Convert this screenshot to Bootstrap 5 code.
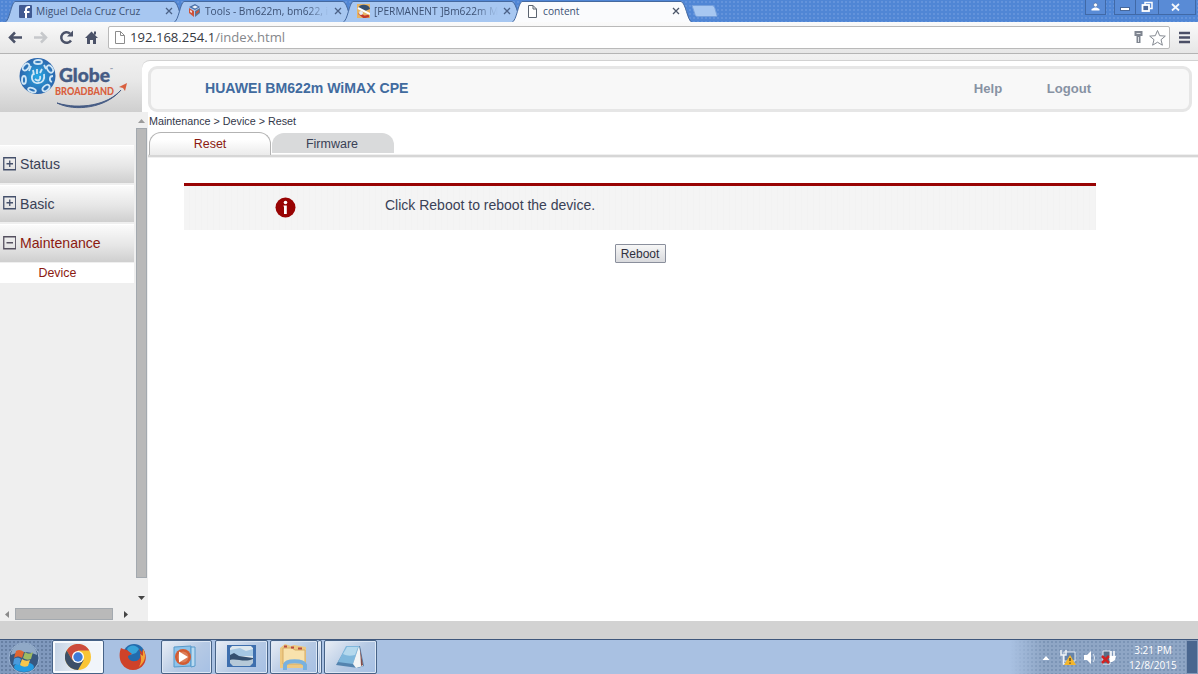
<!DOCTYPE html>
<html lang="en">
<head>
  <meta charset="UTF-8">
  <title>content</title>
  <meta name="viewport" content="width=device-width, initial-scale=1.0">
  <link href="https://cdn.jsdelivr.net/npm/bootstrap@5.3.3/dist/css/bootstrap.min.css" rel="stylesheet">
  <style>
    body {
      font-family: "Liberation Sans", Arial, sans-serif;
      font-size: 12px;
      line-height: 1.2;
      color: #3a4156;
      background: #fff;
    }
    svg { display: block; flex-shrink: 0; }
    .ui-font { font-family: "Open Sans", "Noto Sans", sans-serif; }

    /* browser window */
    .tab-strip {
      height: 22px;
      padding-left: 5px;
      background: radial-gradient(#6393db 35%, transparent 45%) 0 0 / 4px 4px, #5086d5;
    }
    .win-tab {
      width: 180px;
      height: 22px;
      margin-right: -11px;
      padding: 0 12px 0 14px;
      font-size: 10.2px;
      color: #3d5275;
    }
    .win-tab .tab-shape { position: absolute; left: 0; top: 0; }
    .win-tab > .tab-body { position: relative; height: 22px; }
    .tab-title { width: 124px; margin-left: 4px; white-space: nowrap; }
    .tab-fade {
      -webkit-mask-image: linear-gradient(90deg, #000 82%, transparent 100%);
      mask-image: linear-gradient(90deg, #000 82%, transparent 100%);
    }
    .win-buttons { margin-right: 2px; }
    .win-buttons > div { height: 15px; border: 1px solid #4169a6; border-top: 0; background: #598bd6; }
    .win-buttons > div + div { border-left: 0; }
    .toolbar {
      height: 32px;
      padding: 4px 7px 4px 7px;
      background: linear-gradient(#fafafa, #e6e6e6);
      border-bottom: 1px solid #b4b4b4;
    }
    .address {
      height: 23px;
      margin-left: 9px;
      border: 1px solid #b9b9b9;
      border-radius: 2px;
      background: #fff;
      font-size: 13.1px;
      color: #35383f;
    }
    .address span { color: #85878b; }

    /* router page */
    .router { height: 567px; }
    .brand-row { height: 58px; background: linear-gradient(#f1f1f1, #e8e8e8 45%, #cfcfcf); }
    .brand-logo { width: 142px; }
    .brand-panel { margin-top: 6px; padding: 5px 6px 0 6px; background: #fff; border-top: 1px solid #d2d2d2; border-radius: 8px 0 0 0; }
    .brand-box {
      height: 46px;
      border: 3px solid #e6e6e6;
      border-radius: 9px;
      background: #f8f8f8;
      padding-left: 54px;
      padding-bottom: 1px;
      font-weight: bold;
      color: #416b9f;
      font-size: 14.1px;
    }
    .brand-box .top-link { color: #8792a3; font-size: 13.1px; }

    .side-menu { width: 148px; background: #efefef; }
    .menu-col { width: 134px; padding-top: 33px; }
    .menu-item {
      height: 37.5px;
      margin-bottom: 2px;
      padding-left: 3px;
      padding-top: 1px;
      border-top: 1px solid #fff;
      background: linear-gradient(#fbfbfb, #e6e6e6 55%, #cfcfcf);
      font-size: 14.1px;
    }
    .menu-item svg { margin-top: -2px; }
    .menu-sub { height: 20px; margin-top: -1px; padding: 1px 0 0 38.5px; background: #fff; font-size: 12.4px; }
    .red-text { color: #8b1a10; }
    .v-scroll { width: 14px; padding: 7px 1px 7px 2px; }
    .v-thumb { width: 11px; height: 450px; margin-top: 5px; background: #b9b9b9; border: 1px solid #a3a9af; }
    .h-scroll { height: 14px; padding-left: 5px; }
    .h-thumb { width: 98px; height: 12px; margin: 0 11px 0 6px; background: #b9b9b9; border: 1px solid #a3a9af; }

    .crumbs { height: 20px; padding: 3px 0 0 1px; font-size: 10.75px; color: #33384a; }
    .page-tabs { height: 26px; padding-left: 1px; font-size: 12.5px; background: linear-gradient(#fff 22px, #f0f0f0 22px, #f0f0f0 23px, #d6d6d6 23px, #d6d6d6 25px, #f0f0f0 25px); }
    .page-tab { width: 122px; height: 22px; margin-right: 1px; padding-top: 1px; border-radius: 12px 12px 0 0; }
    .page-tab-on { height: 23px; border: 1px solid #b3b3b3; border-bottom: 0; background: linear-gradient(#fff 30%, #ebebeb); }
    .page-tab-off { margin-top: 1px; height: 20px; padding: 3px 2px 0 0; background: #d9dadb; }
    .notice {
      width: 912px;
      height: 47px;
      margin: 25px 0 14px 36px;
      padding-bottom: 1px;
      border-top: 3px solid #980303;
      background: repeating-linear-gradient(90deg, #f4f4f4 0 5px, #f2f2f2 5px 6px);
      font-size: 14px;
    }
    .notice-icon { width: 201px; padding-left: 91px; }
    .reboot-btn {
      width: 51px;
      height: 19px;
      margin-left: 466.5px;
      padding: 0;
      border: 1px solid #8a8f9c;
      border-radius: 1px;
      background: linear-gradient(#f7f7f7, #d9dadd);
      color: #30303e;
      font-size: 12px;
      line-height: 16px;
    }

    /* desktop taskbar */
    .status-band { height: 18px; background: #d2d2d2; }
    .taskbar { height: 35px; border-top: 1px solid #3f577c; background: #a9c1e2; }
    .start-zone {
      width: 52px;
      background: radial-gradient(#6780a3 35%, transparent 45%) 0 0 / 4px 4px, #8099bd;
    }
    .task-btn {
      height: 34px;
      border: 1px solid #476387;
      border-radius: 2px;
      background: linear-gradient(135deg, #e9eef5, #b5c9e4 55%, #a6c0e4);
      box-shadow: inset 0 0 0 1px #dce7f5;
    }
    .task-btn-active { background: linear-gradient(100deg, #c3d2e4, #f1f5fa 70%); box-shadow: inset 0 0 0 2px #f7fafd; }
    .tray {
      width: 188px;
      background: linear-gradient(90deg, #a9c1e2, transparent 18%), radial-gradient(#7c95b6 35%, transparent 45%) 0 0 / 4px 4px, #8fa6c5;
      color: #fff;
      font-size: 10.1px;
    }
    .clock { width: 66px; line-height: 15px; padding-top: 3px; }
    .peek { width: 12px; background: #49668f; border: 1px solid #8299b9; }
  </style>
</head>
<body class="overflow-hidden">

  <!-- tab strip -->
  <div class="tab-strip ui-font d-flex">
    <div class="win-tab position-relative flex-shrink-0">
      <svg class="tab-shape" width="180" height="22"><path d="M0 22.5C5 20 6 3 10 1.500H169C174 3 175 20 180 22.500" fill="#a7c7f1" stroke="#45699f"/></svg>
      <div class="tab-body d-flex align-items-center">
        <svg width="13" height="13"><rect width="13" height="13" rx="1" fill="#405a92"/><path d="M11 2H9.500C7.500 2 7 3 7 4.500V13M5 7h5.500" fill="none" stroke="#fff" stroke-width="2"/></svg>
        <div class="tab-title">Miguel Dela Cruz Cruz</div>
        <svg class="ms-auto" width="8" height="8"><path d="M1 1l6 6M7 1L1 7" stroke="#4b6186" stroke-width="1.300"/></svg>
      </div>
    </div>
    <div class="win-tab position-relative flex-shrink-0">
      <svg class="tab-shape" width="180" height="22"><path d="M0 22.500C5 20 6 3 10 1.500H169C174 3 175 20 180 22.500" fill="#a7c7f1" stroke="#45699f"/></svg>
      <div class="tab-body d-flex align-items-center">
        <svg width="13" height="14"><path d="M1 3l6-3 5 3-5 3z" fill="#4a70a8"/><path d="M1 4l5 3v6l-5-4z" fill="#cf5238"/><path d="M12 4L7 7v6l5-4z" fill="#60748f"/><path d="M4 3l3-1.500L10 3 7 4.500z" fill="#eef3fa"/><path d="M2 6l2 1v2L2 8z" fill="#f3d5cf"/><path d="M8 8l3-2v2l-3 2z" fill="#cf5238"/></svg>
        <div class="tab-title tab-fade">Tools - Bm622m, bm622, i</div>
        <svg class="ms-auto" width="8" height="8"><path d="M1 1l6 6M7 1L1 7" stroke="#4b6186" stroke-width="1.300"/></svg>
      </div>
    </div>
    <div class="win-tab position-relative flex-shrink-0">
      <svg class="tab-shape" width="180" height="22"><path d="M0 22.500C5 20 6 3 10 1.500H169C174 3 175 20 180 22.500" fill="#a7c7f1" stroke="#45699f"/></svg>
      <div class="tab-body d-flex align-items-center">
        <svg width="13" height="14"><rect width="14" height="14" fill="#e7b465"/><path d="M1 5C1 0 12-1 13 5L8 7z" fill="#37506f"/><path d="M1 4l12 6" stroke="#fff" stroke-width="2"/><path d="M2 9l5 4 5-1" fill="none" stroke="#c33a2b" stroke-width="2.500"/><circle cx="4" cy="9" r="2" fill="#e7eef5"/></svg>
        <div class="tab-title tab-fade">[PERMANENT ]Bm622m M</div>
        <svg class="ms-auto" width="8" height="8"><path d="M1 1l6 6M7 1L1 7" stroke="#4b6186" stroke-width="1.300"/></svg>
      </div>
    </div>
    <div class="win-tab position-relative flex-shrink-0">
      <svg class="tab-shape" width="180" height="22"><path d="M0 22.500C5 20 6 3 10 1.500H169C174 3 175 20 180 22.500" fill="#fafbfd" stroke="#45699f"/></svg>
      <div class="tab-body d-flex align-items-center">
        <svg width="13" height="13"><path d="M2.500.5H7L10.500 4v8.500h-8zM7 .5V4h3.500" fill="#fff" stroke="#5b6470"/></svg>
        <div class="tab-title">content</div>
        <svg class="ms-auto" width="8" height="8"><path d="M1 1l6 6M7 1L1 7" stroke="#4b5569" stroke-width="1.300"/></svg>
      </div>
    </div>
    <svg class="ms-2 mt-1" width="30" height="14"><path d="M3 1.500h20c2 0 2 1 3 3l2 7c0 1 0 1-1 1H9c-2 0-3-1-3-2z" fill="#a7c7f1" stroke="#76a0dc"/></svg>
    <div class="win-buttons d-flex ms-auto">
      <div class="d-flex justify-content-center me-1" style="width: 21px"><svg width="9" height="13"><circle cx="4.500" cy="5" r="2" fill="#fff" stroke="#47679a" stroke-width=".6"/><path d="M.5 10.500V9l3-1.500h2L8.500 9v1.500z" fill="#fff"/></svg></div>
      <div class="d-flex justify-content-center ms-1" style="width: 22px; border-left: 1px solid #4169a6"><svg width="10" height="13"><rect x=".5" y="7.500" width="9" height="3" fill="#fff" stroke="#47679a"/></svg></div>
      <div class="d-flex justify-content-center" style="width: 23px"><svg width="12" height="13"><path d="M4 5V2.500h7v6H9" fill="none" stroke="#fff" stroke-width="1.500"/><rect x="1.500" y="5" width="6.500" height="6" fill="#49679a" stroke="#fff" stroke-width="1.800"/></svg></div>
      <div class="d-flex justify-content-center" style="width: 37px"><svg class="me-1" width="9" height="13"><path d="M1 4l7 6.500M8 4l-7 6.500" stroke="#f4f7fb" stroke-width="1.800"/></svg></div>
    </div>
  </div>

  <!-- address bar -->
  <div class="toolbar d-flex align-items-center">
    <svg width="92" height="18" fill="none">
      <path d="M15 8.500H3M8 3.500l-5 5 5 5" stroke="#4b5268" stroke-width="2.500"/>
      <path d="M27 8.500h12M34 3.500l5 5-5 5" stroke="#c6c8cb" stroke-width="2.500"/>
      <path d="M64 11.500A5.300 5.300 0 1 1 63 4.500" stroke="#4b5268" stroke-width="2.500"/><path d="M66 1.500v6h-6z" fill="#4b5268"/>
      <path d="M78 9L84.500 2.500 91 9h-2v6h-3v-4h-3v4h-3V9zM87 2.500h2v3h-2z" fill="#4b5268"/>
    </svg>
    <div class="address flex-grow-1 d-flex align-items-center ui-font">
      <svg class="ms-1" width="17" height="15"><path d="M2.500 1.500h5l4 4v8h-9zM7.500 1.500v4h4" fill="#fff" stroke="#8c8c8c"/></svg>
      <div>192.168.254.1<span>/index.html</span></div>
      <svg class="ms-auto" width="36" height="18"><path d="M1.500 2h8v5H7.500v7h-4V7h-2z" fill="#7f8590"/><path d="M3.500 4.500h4M5.500 8v5" stroke="#dfe2e6"/><path d="M24.500 1.500l2.200 5.200 5.600.4-4.300 3.600 1.400 5.500-4.900-3-4.900 3 1.400-5.500-4.300-3.600 5.600-.4z" fill="#fff" stroke="#858a92"/></svg>
    </div>
    <svg class="ms-2" width="13" height="13"><path d="M1 2h11M1 6.500h11M1 11h11" stroke="#4b4f66" stroke-width="2.600"/></svg>
  </div>

  <div class="router d-flex flex-column">
    <div class="brand-row d-flex">
      <div class="brand-logo">
        <svg width="142" height="58">
          <defs><radialGradient id="globe"><stop offset="0" stop-color="#27a8e4"/><stop offset="1" stop-color="#2d67ad"/></radialGradient></defs>
          <circle cx="37.500" cy="22" r="18" fill="url(#globe)"/>
          <g fill="none" stroke="#cfe6f6" stroke-width="1.800">
            <path d="M33 20c-3 5 1 10 5 9 5 0 7-4 6-9M34 21l-1-5M37 20v-5M40 19l2-4M35 25c3 3 6 1 5-3"/>
            <ellipse cx="38" cy="8" rx="4" ry="2"/><ellipse cx="50" cy="15" rx="2.500" ry="4" transform="rotate(-35 50 15)"/>
            <ellipse cx="26" cy="13" rx="2.500" ry="4" transform="rotate(40 26 13)"/><ellipse cx="24" cy="26" rx="2" ry="4"/>
            <ellipse cx="32" cy="36" rx="4" ry="2" transform="rotate(20 32 36)"/><ellipse cx="46" cy="34" rx="4" ry="2.500" transform="rotate(-40 46 34)"/>
            <path d="M53 22c-4 0-4 5-1 6M31 12l-2 5M44 11l2 4"/>
          </g>
          <text x="59" y="28" font-family="Lato, sans-serif" font-size="19.500" font-weight="900" fill="#455b84" stroke="#455b84" stroke-width=".4" textLength="51" lengthAdjust="spacingAndGlyphs">Globe</text>
          <text x="110" y="17" font-family="Lato, sans-serif" font-size="4" fill="#455b84">™</text>
          <text x="55" y="41" font-family="Lato, sans-serif" font-size="10.500" font-weight="900" fill="#d95f3e" textLength="59" lengthAdjust="spacingAndGlyphs">BROADBAND</text>
          <path d="M57 49C75 58 106 54 121 36 108 51 80 56 57 49z" fill="#455b84" stroke="#455b84"/>
          <path d="M119 33l8-4-2 8-2-3z" fill="#d95f3e"/>
        </svg>
      </div>
      <div class="brand-panel flex-grow-1">
        <div class="brand-box d-flex align-items-center">
          <div>HUAWEI BM622m WiMAX CPE</div>
          <div class="top-link ms-auto">Help</div>
          <div class="top-link" style="margin-left: 44.5px; margin-right: 98px">Logout</div>
        </div>
      </div>
    </div>

    <div class="d-flex flex-grow-1">
      <div class="side-menu d-flex flex-column">
        <div class="d-flex flex-grow-1">
          <div class="menu-col">
            <div class="menu-item d-flex align-items-center">
              <svg class="me-1" width="13" height="14"><path d="M.75.75h12v12h-12zM3.500 6.750h6.500M6.750 3.500v6.500" fill="none" stroke="#45506b" stroke-width="1.300"/></svg>Status
            </div>
            <div class="menu-item d-flex align-items-center">
              <svg class="me-1" width="13" height="14"><path d="M.75.75h12v12h-12zM3.500 6.750h6.500M6.750 3.500v6.500" fill="none" stroke="#45506b" stroke-width="1.300"/></svg>Basic
            </div>
            <div class="menu-item red-text d-flex align-items-center">
              <svg class="me-1" width="13" height="14"><path d="M.75.75h12v12h-12zM3.500 6.750h6.500" fill="none" stroke="#55505f" stroke-width="1.300"/></svg>Maintenance
            </div>
            <div class="menu-sub red-text d-flex align-items-center">Device</div>
          </div>
          <div class="v-scroll d-flex flex-column align-items-center">
            <svg width="7" height="4"><path d="M0 4l3.500-4L7 4z" fill="#9b9b9b"/></svg>
            <div class="v-thumb"></div>
            <svg class="mt-auto mb-0" width="7" height="4"><path d="M0 0h7L3.500 4z" fill="#444"/></svg>
          </div>
        </div>
        <div class="h-scroll d-flex align-items-center">
          <svg width="4" height="7"><path d="M4 0v7L0 3.500z" fill="#8b8b8b"/></svg>
          <div class="h-thumb"></div>
          <svg width="4" height="7"><path d="M0 0v7l4-3.500z" fill="#444"/></svg>
        </div>
      </div>

      <div class="flex-grow-1">
        <div class="crumbs">Maintenance &gt; Device &gt; Reset</div>
        <div class="page-tabs d-flex">
          <div class="page-tab page-tab-on red-text d-flex align-items-center justify-content-center">Reset</div>
          <div class="page-tab page-tab-off d-flex align-items-center justify-content-center">Firmware</div>
        </div>
        <div class="notice d-flex align-items-center">
          <div class="notice-icon">
            <svg width="21" height="21"><circle cx="10.500" cy="10.500" r="10" fill="#980303"/><circle cx="10.500" cy="5.500" r="1.800" fill="#fff"/><path d="M8.500 8.500h3.300V17H9V9.500h-.5z" fill="#fff"/></svg>
          </div>
          <div class="pb-1">Click Reboot to reboot the device.</div>
        </div>
        <button class="reboot-btn d-block">Reboot</button>
      </div>
    </div>
  </div>

  <div class="status-band"></div>

  <!-- taskbar -->
  <div class="taskbar d-flex">
    <div class="start-zone d-flex align-items-center justify-content-center">
      <svg class="me-1" width="32" height="32"><circle cx="16" cy="17" r="15" fill="#38577f" stroke="#a2b9d6"/><path d="M3 14a13 12 0 0 1 26 0c-8-4-18-4-26 0z" fill="#90a9c7"/><ellipse cx="16" cy="26" rx="10" ry="5" fill="#249be1"/><path d="M8 10c3-2 5-1 8 1l-2 6c-3-2-5-2-8 0z" fill="#df6532"/><path d="M17 11c3 2 5 2 8 0l-2 7c-3 1-5 1-8-1z" fill="#9eba62"/><path d="M6 18c3-2 5-1 7 0l-2 6c-3-1-4-1-6 0z" fill="#4b9bdd"/><path d="M14 18c3 2 5 2 8 1l-2 6c-3 1-5 1-8-1z" fill="#f7c64b"/></svg>
    </div>
    <div class="task-btn task-btn-active d-flex align-items-center justify-content-center" style="width: 52px">
      <svg width="26" height="26"><circle cx="13" cy="13" r="13" fill="#fac536"/><path d="M1.700 6.500a13 13 0 0 1 22.600 0H13L7.400 16.200z" fill="#cc4b3d"/><path d="M1.700 6.500A13 13 0 0 0 13 26l5.600-9.700H7.400z" fill="#3c4f68"/><circle cx="13" cy="13" r="6" fill="#fff"/><circle cx="13" cy="13" r="4.700" fill="#3e7bd8"/></svg>
    </div>
    <div class="d-flex align-items-center justify-content-center" style="width: 57px">
      <svg width="28" height="28"><circle cx="15" cy="12" r="11" fill="#236bad"/><path d="M8 6c4-5 9-4 12 0l-3 4-6 2z" fill="#38a3d9"/><path d="M2 5c-2 5-2 12 1 16 5 8 17 8 22 0 3-5 2-11-1-15l-1 3-3-3c3 7 1 12-4 12-4 1-7-2-7-5l4-2-5-4-4-1z" fill="#cf4229"/><path d="M24 6c4 7 2 13-4 18 2-4 3-8 1-13l3 2z" fill="#f3a435"/></svg>
    </div>
    <div class="task-btn d-flex align-items-center justify-content-center" style="width: 51px; margin-right: 3px">
      <svg class="me-1" width="26" height="26"><path d="M2 3l17-1v20l-17 1z" fill="#8cc3eb" stroke="#5799ca"/><path d="M19 3h4v19l-4 1z" fill="#b9daf1" stroke="#5799ca"/><circle cx="11" cy="13" r="8" fill="#d35b31"/><circle cx="11" cy="13" r="5.500" fill="#dc7d58"/><path d="M7 7.500l9 5.500-9 5.500z" fill="#fff"/></svg>
    </div>
    <div class="task-btn d-flex align-items-center justify-content-center" style="width: 53px; margin-right: 2px">
      <svg width="29" height="24"><rect width="29" height="22" fill="#3e6fae"/><path d="M3 1h23v20H3z" fill="#dce7ee"/><path d="M3 5l10-2 6 3 7-2v7H3z" fill="#a6c8e3"/><path d="M3 10l4-2 5 3 14 2v4H3z" fill="#35506f"/><path d="M3 15c7-2 14 3 23-1v7H3z" fill="#b6c9d8"/><path d="M0 15l7 7H0zM29 15l-7 7h7zM0 0h6L0 6zM23 0h6v6z" fill="#3e6fae"/></svg>
    </div>
    <div class="task-btn d-flex align-items-center justify-content-center" style="width: 48px">
      <svg width="30" height="27"><path d="M1 4l5-4 6 2 3-1 12 2v21H1z" fill="#edc982"/><path d="M4 4h9l3 2h10v14H4z" fill="#f8e2ad" stroke="#d6ab65"/><path d="M5 2.500h3M12 3.500h3M19 4.500h4" stroke="#b94b42" stroke-width="2"/><path d="M6 26v-5c1-5 18-5 20 0v5" fill="none" stroke="#78b1df" stroke-width="4"/></svg>
    </div>
    <div class="task-btn border-start-0" style="width: 4px; margin-right: 2px"></div>
    <div class="task-btn d-flex align-items-center justify-content-center" style="width: 53px">
      <svg width="30" height="26"><path d="M11 2h13l4 20-6 2-22-3z" fill="#5484af"/><path d="M10 2h13l-6 18-15-2z" fill="#7fb7dc"/><path d="M11 3h11l-3 8c-5 1-8 1-12-1z" fill="#b4d8ed"/><path d="M23 2l4 20-7 2-3-4z" fill="#f2f4f5"/><path d="M24 4l3 17-2 1z" fill="#844d4a"/></svg>
    </div>

    <div class="tray ui-font d-flex ms-auto">
      <div class="d-flex align-items-center ms-auto">
        <svg width="84" height="24">
          <path d="M6.500 15l3.500-4 3.500 4z" fill="#fff"/>
          <path d="M28 7h11v9H28z" fill="#6684aa" stroke="#e2e9f1"/><path d="M25 5v5h5V5M27.500 10v9h4" fill="none" stroke="#eef3f8" stroke-width="1.500"/><path d="M34 10l6 10H28z" fill="#f4b62d"/><path d="M34 13v3M34 17.500v1.200" stroke="#604c25" stroke-width="1.500"/>
          <path d="M48 10h3l4-4v13l-4-4h-3z" fill="#fff"/><path d="M57 9c2 3 2 5 0 8" fill="none" stroke="#dbe5ef"/>
          <path d="M67 6h7v13h-7z" fill="#556d86" stroke="#e5ebf3"/><path d="M73 11h7l-1 4-3 2h-2z" fill="#fff"/><path d="M75 11V6M78 11V6" stroke="#fff" stroke-width="1.500"/><path d="M66 11l7 7M73 11l-7 7" stroke="#cf2222" stroke-width="2.500"/>
        </svg>
      </div>
      <div class="clock text-center">3:21 PM<br>12/8/2015</div>
      <div class="peek"></div>
    </div>
  </div>

  <script src="https://cdn.jsdelivr.net/npm/bootstrap@5.3.3/dist/js/bootstrap.bundle.min.js"></script>
</body>
</html>
